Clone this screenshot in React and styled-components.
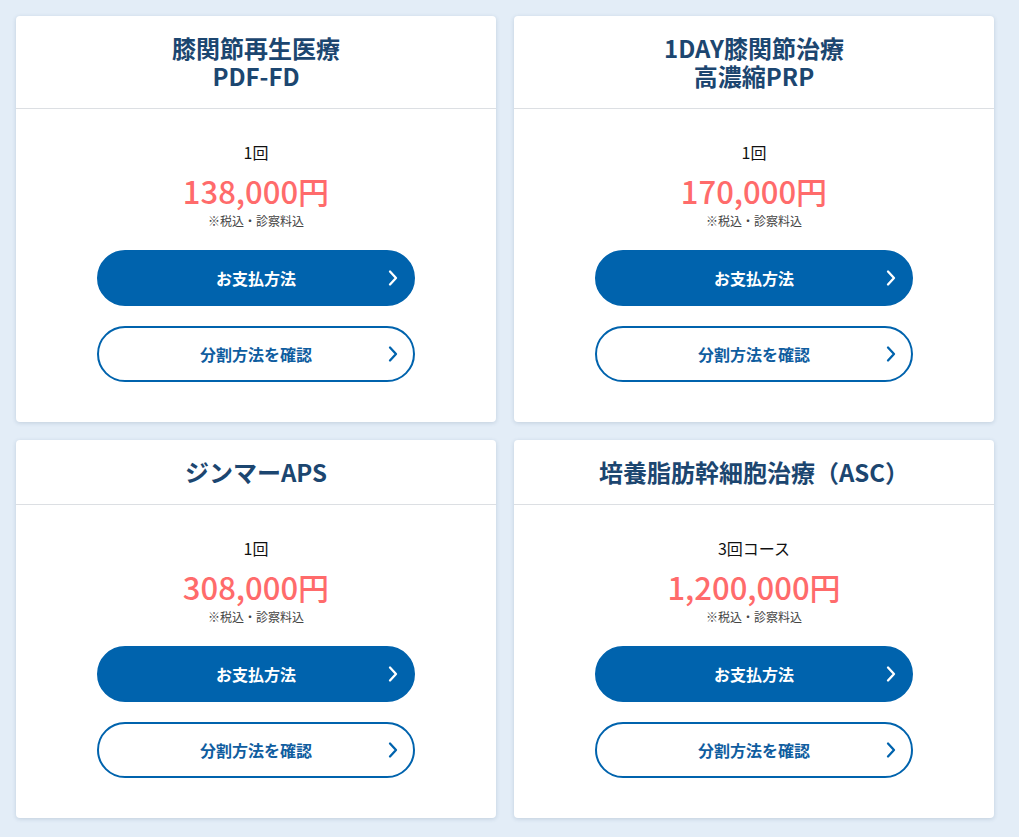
import React from 'react';
import styled, { createGlobalStyle } from 'styled-components';

const GlobalStyle = createGlobalStyle`
    html, body {
        margin: 0;
        padding: 0;
        background-color: #e3edf7;
        font-family: "Noto Sans CJK JP", "Noto Sans", sans-serif;
    }
`;

const Page = styled.div`
    padding: 16px;
    display: grid;
    grid-template-columns: 480px 480px;
    column-gap: 18px;
    row-gap: 18px;
`;

const Card = styled.div`
    background-color: #fff;
    border-radius: 4px;
    box-shadow: 0 1px 4px rgba(40, 70, 110, 0.18);
    display: flex;
    flex-direction: column;
`;

const CardHead = styled.div`
    padding: 18px 10px;
    border-bottom: 1px solid #dcdfe3;
    text-align: center;
    font-size: 24px;
    font-weight: 700;
    line-height: 28px;
    color: #1c4670;
`;

const CardBody = styled.div`
    padding: 32px 0 40px;
    display: flex;
    flex-direction: column;
    align-items: center;
`;

const Count = styled.div`
    font-size: 16px;
    line-height: 22px;
    color: #111;
`;

const Price = styled.div`
    margin-top: 11px;
    font-size: 31px;
    line-height: 34px;
    font-weight: 500;
    color: #ff6b6b;
`;

const Note = styled.div`
    margin-top: 5px;
    font-size: 12px;
    line-height: 16px;
    color: #444;
`;

const Buttons = styled.div`
    margin-top: 21px;
    display: flex;
    flex-direction: column;
    gap: 20px;
`;

const PillButton = styled.a`
    position: relative;
    box-sizing: border-box;
    width: 318px;
    height: 56px;
    border-radius: 28px;
    display: flex;
    align-items: center;
    justify-content: center;
    font-size: 16px;
    font-weight: 700;
    text-decoration: none;
    cursor: pointer;
    background-color: ${p => (p.outline ? '#fff' : '#0063ad')};
    color: ${p => (p.outline ? '#0f5d9f' : '#fff')};
    border: 2px solid #0063ad;
`;

const Chevron = styled.svg`
    position: absolute;
    right: 15px;
    top: 50%;
    transform: translateY(-50%);
`;

const Arrow = ({ color }) => (
    <Chevron width="10" height="17" viewBox="0 0 10 17">
        <path d="M2 2 L8 8.5 L2 15" fill="none" stroke={color} strokeWidth="2.3" strokeLinecap="round" strokeLinejoin="round" />
    </Chevron>
);

const plans = [
    { title: ['膝関節再生医療', 'PDF-FD'], count: '1回', price: '138,000円' },
    { title: ['1DAY膝関節治療', '高濃縮PRP'], count: '1回', price: '170,000円' },
    { title: ['ジンマーAPS'], count: '1回', price: '308,000円' },
    { title: ['培養脂肪幹細胞治療（ASC）'], count: '3回コース', price: '1,200,000円' },
];

const App = () => {
    return (
        <>
            <GlobalStyle />
            <Page>
                {plans.map((plan, i) => (
                    <Card key={i}>
                        <CardHead>
                            {plan.title.map((line, j) => (
                                <div key={j}>{line}</div>
                            ))}
                        </CardHead>
                        <CardBody>
                            <Count>{plan.count}</Count>
                            <Price>{plan.price}</Price>
                            <Note>※税込・診察料込</Note>
                            <Buttons>
                                <PillButton>
                                    お支払方法
                                    <Arrow color="#fff" />
                                </PillButton>
                                <PillButton outline>
                                    分割方法を確認
                                    <Arrow color="#0063ad" />
                                </PillButton>
                            </Buttons>
                        </CardBody>
                    </Card>
                ))}
            </Page>
        </>
    );
};

export default App;
